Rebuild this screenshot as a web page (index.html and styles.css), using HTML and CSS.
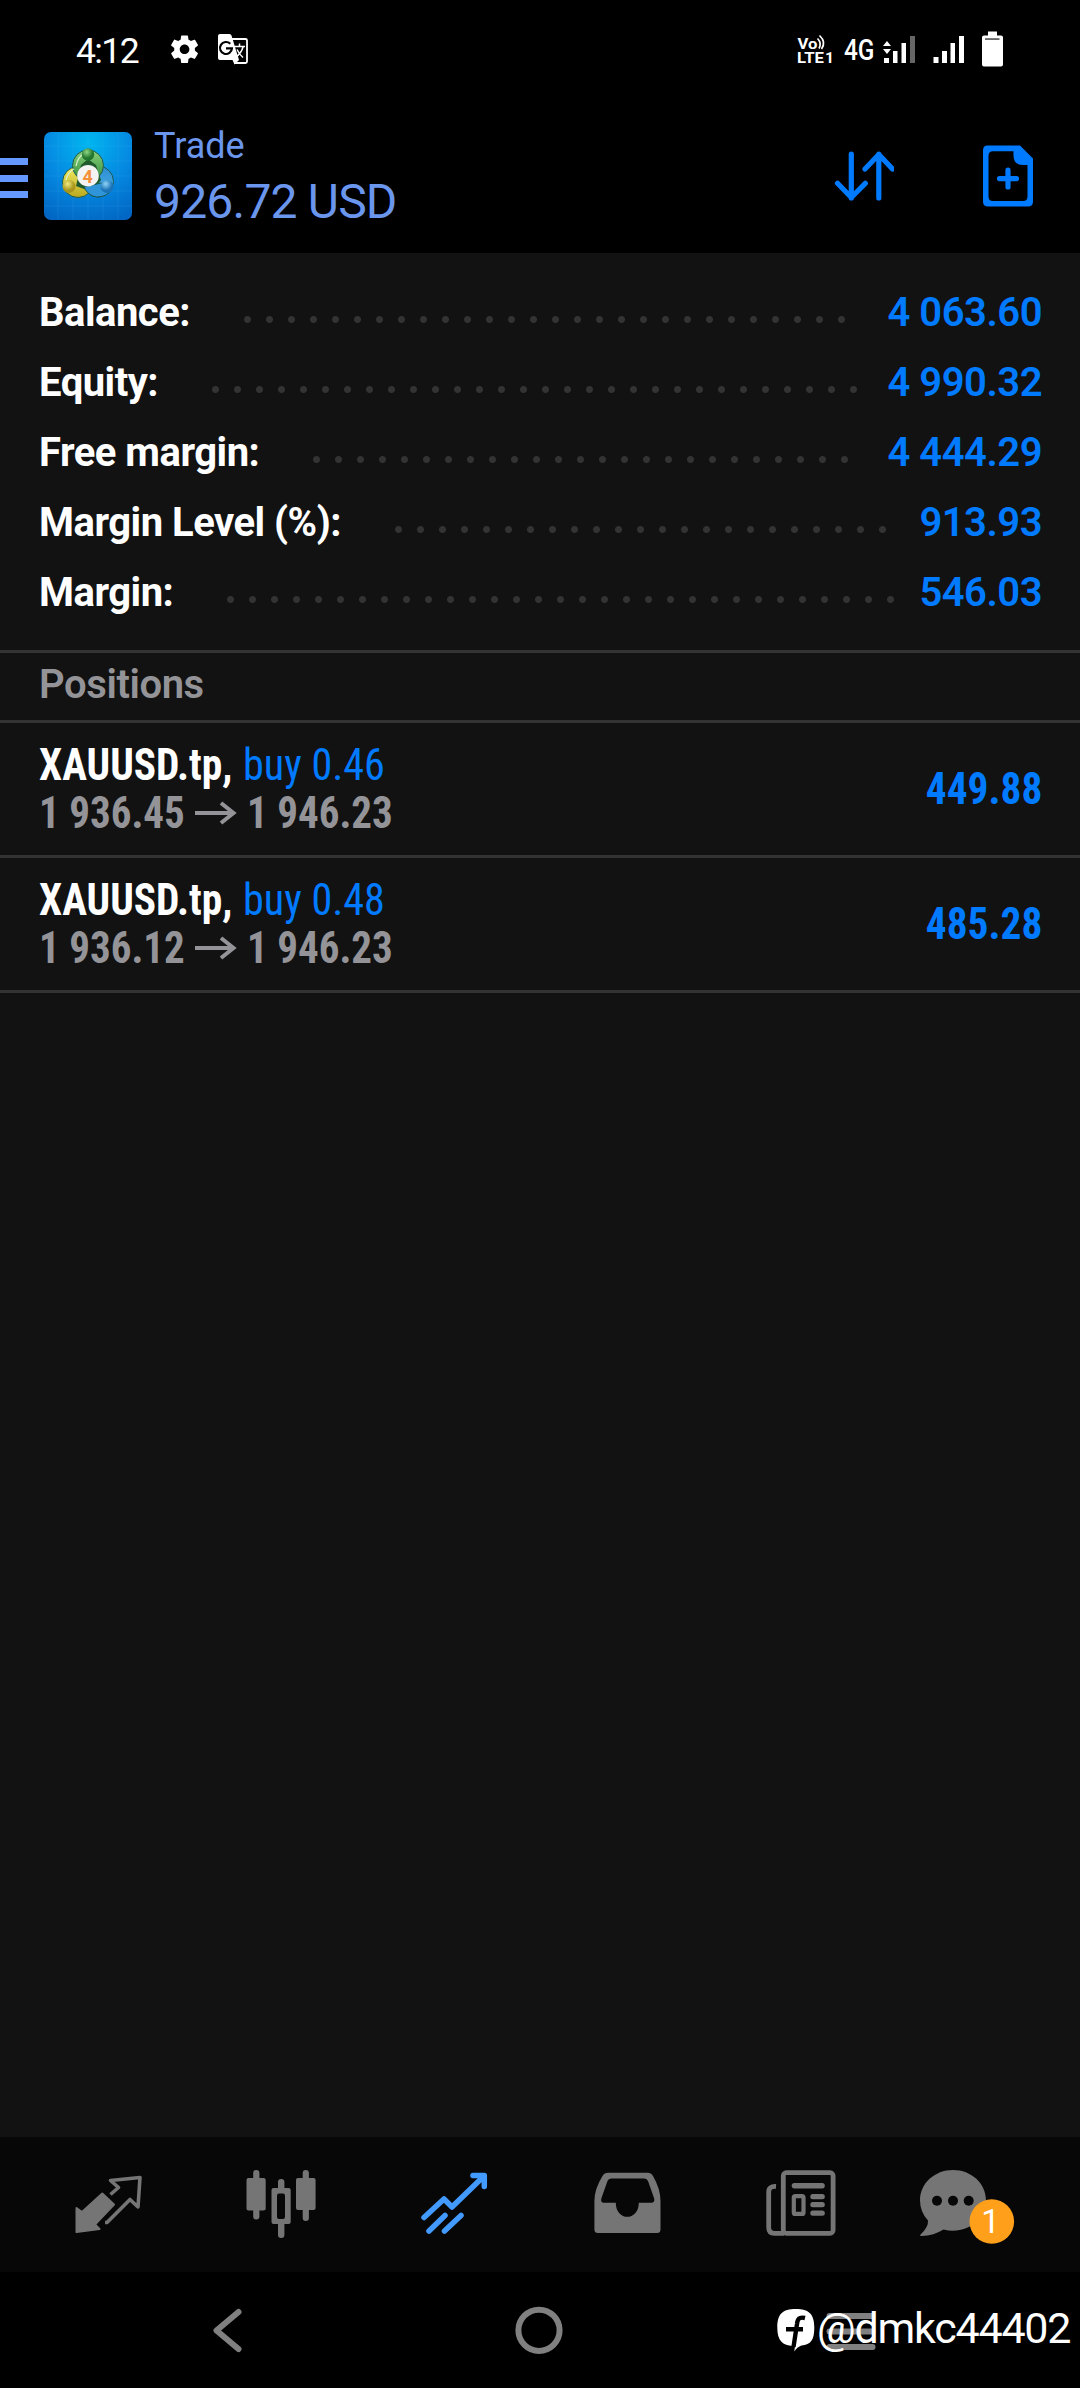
FILE: index.html
```html
<!DOCTYPE html>
<html lang="en">
<head>
<meta charset="utf-8">
<title>Trade</title>
<link rel="stylesheet" href="styles.css">
</head>
<body>
<div class="screen">
  <div class="statusbar">
    <span class="clock">4:12</span>
    <svg class="status-left" width="90" height="40" viewBox="165 30 90 40">
      <path fill="#fff" transform="translate(168 32.7) scale(1.38)" d="M19.43 12.98c.04-.32.07-.64.07-.98s-.03-.66-.07-.98l2.11-1.65c.19-.15.24-.42.12-.64l-2-3.46c-.12-.22-.39-.3-.61-.22l-2.49 1c-.52-.4-1.08-.73-1.69-.98l-.38-2.65C14.46 2.18 14.25 2 14 2h-4c-.25 0-.46.18-.49.42l-.38 2.65c-.61.25-1.17.59-1.69.98l-2.49-1c-.23-.09-.49 0-.61.22l-2 3.46c-.13.22-.07.49.12.64l2.11 1.65c-.04.32-.07.65-.07.98s.03.66.07.98l-2.11 1.65c-.19.15-.24.42-.12.64l2 3.46c.12.22.39.3.61.22l2.49-1c.52.4 1.08.73 1.69.98l.38 2.65c.03.24.24.42.49.42h4c.25 0 .46-.18.49-.42l.38-2.65c.61-.25 1.17-.59 1.69-.98l2.49 1c.23.09.49 0 .61-.22l2-3.46c.12-.22.07-.49-.12-.64l-2.11-1.65zM12 15.5c-1.93 0-3.5-1.57-3.5-3.5s1.57-3.5 3.500-3.500 3.500 1.570 3.500 3.500-1.570 3.500-3.500 3.500z"/>
      <path fill="none" stroke="#fff" stroke-width="1.8" d="M230 39H245.5Q247 39 247 40.5V61.500Q247 63 245.500 63H234"/>
      <path fill="#fff" d="M220 34H229.500Q231 34 231.500 35.500L239 60L234.500 64.500L232.500 60H220Q218 60 218 58V36Q218 34 220 34Z"/>
      <path fill="none" stroke="#000" stroke-width="2.2" d="M230.300 43.800A6 6 0 1 0 232 48.300H226"/>
      <path fill="none" stroke="#fff" stroke-width="1.500" d="M233 46.500H245M239.500 43.500V46.500M243 47Q241.500 53 235.500 57.500M237 49.500Q239.500 54.500 243 57.500"/>
    </svg>
    <svg class="status-right" width="215" height="45" viewBox="795 27 215 45" fill="#fff">
      <g class="volte">
        <text x="797.500" y="49" textLength="20" lengthAdjust="spacingAndGlyphs">Vo</text>
        <text x="797" y="63" textLength="27" lengthAdjust="spacingAndGlyphs">LTE</text>
        <text x="825" y="63" textLength="9" lengthAdjust="spacingAndGlyphs">1</text>
      </g>
      <path fill="none" stroke="#fff" stroke-width="1.700" d="M817.500 38.500Q822 43 819 48.500M819.500 35.500Q826.500 42 821.500 49"/>
      <text class="net" x="844" y="60" textLength="30.500" lengthAdjust="spacingAndGlyphs">4G</text>
      <path d="M883 46L887 41L891 46ZM883 49L887 54L891 49ZM884 58h5v5h-5zM893 51h4.500v12h-4.500zM901.500 43h4.500v20h-4.500z"/>
      <path fill="#666" d="M910 36h5v27h-5z"/>
      <path d="M933.500 57h5v6h-5zM942 51h5v12h-5zM950.500 43h4.500v20h-4.500zM959 36h5v27h-5z"/>
      <path d="M988 31.500h9v4h4q2 0 2 2v27q0 2-2 2h-17q-2 0-2-2v-27q0-2 2-2h4z"/>
      <path fill="#444" d="M985 38.300h14.500v1.500h-14.500z"/>
    </svg>
  </div>

  <header class="header">
    <div class="menu"><i></i><i></i><i></i></div>
    <svg class="logo" width="88" height="88" viewBox="44 132 88 88">
      <defs>
        <radialGradient id="bg" cx=".5" cy=".12" r=".95"><stop offset="0" stop-color="#00b6f0"/><stop offset=".5" stop-color="#058be2"/><stop offset="1" stop-color="#0266c4"/></radialGradient>
        <linearGradient id="gr" x1="0" y1="0" x2="0" y2="1"><stop offset="0" stop-color="#8bd07c"/><stop offset="1" stop-color="#2f8d38"/></linearGradient>
        <linearGradient id="ye" x1="0" y1="0" x2="0" y2="1"><stop offset="0" stop-color="#f0ea62"/><stop offset="1" stop-color="#b9a91f"/></linearGradient>
        <linearGradient id="bl" x1="0" y1="0" x2="0" y2="1"><stop offset="0" stop-color="#2d8ccf"/><stop offset="1" stop-color="#4ab4ee"/></linearGradient>
        <radialGradient id="gh" cx=".4" cy=".3"><stop offset="0" stop-color="#8fd886"/><stop offset="1" stop-color="#21752c"/></radialGradient>
        <radialGradient id="yh" cx=".4" cy=".3"><stop offset="0" stop-color="#f2ea80"/><stop offset="1" stop-color="#a8961c"/></radialGradient>
        <radialGradient id="bh" cx=".4" cy=".3"><stop offset="0" stop-color="#8fd4f7"/><stop offset="1" stop-color="#1b73b8"/></radialGradient>
      </defs>
      <rect x="44" y="132" width="88" height="88" rx="7" fill="url(#bg)"/>
      <path stroke="#5cc8ff" stroke-opacity=".16" stroke-width=".8" d="M58 132V220M73 132V220M88 132V220M103 132V220M118 132V220M44 146H132M44 161H132M44 176H132M44 191H132M44 206H132"/>
      <g stroke="#1c5a50" stroke-width="1">
        <circle cx="98" cy="181.500" r="15.500" fill="url(#bl)"/>
        <circle cx="78" cy="182" r="15.500" fill="url(#ye)"/>
        <circle cx="88" cy="165.500" r="15.500" fill="url(#gr)"/>
        <path fill="#1f5b2c" stroke="none" d="M81 165L88 159L96 165L101 180L92 192L76 186Z"/>
        <path fill="#2f94d8" d="M84 187Q88 196 97 197Q108 197 112 188L101 183Z"/>
      </g>
      <path fill="none" stroke="#d8f2d0" stroke-width="1.300" d="M76 166Q78 156 84 154M66 180Q68 172 74 169"/>
      <circle cx="88" cy="154.500" r="6.200" fill="url(#gh)"/>
      <circle cx="69" cy="186.500" r="6.500" fill="url(#yh)"/>
      <circle cx="107" cy="186.500" r="6.500" fill="url(#bh)"/>
      <circle cx="88" cy="175.700" r="10.800" fill="#f3f3f3"/>
      <text class="logo-num" x="82.500" y="182.500">4</text>
    </svg>
    <div class="title"><span class="title-top">Trade</span><span class="title-sum">926.72 USD</span></div>
    <svg class="sort" width="60" height="54" viewBox="834 150 60 54">
      <path d="M851.300 154V198M837.500 183.300L851.300 197.500L865.300 183.300M878.800 198V154M865 169L878.800 154.500L892.500 169"/>
    </svg>
    <svg class="new-order" width="52" height="62" viewBox="982 145 52 62">
      <path fill="#007aff" fill-rule="evenodd" d="M987.500 145.500H1020L1033 158.500V201.500Q1033 206.500 1028 206.500H988Q983 206.500 983 201.500V150.500Q983 145.500 987.500 145.500ZM993 151.200Q988.500 151.200 988.500 155.700V196.500Q988.500 201 993 201H1023Q1027.500 201 1027.500 196.500V165H1023Q1013.500 165 1013.500 155.500V151.200Z"/>
      <path d="M999.500 178.600H1016.500M1008 170.200V187"/>
    </svg>
  </header>

  <main class="content">
    <section class="summary">
      <div class="row"><span>Balance:</span><div class="leader"><i></i></div><b>4 063.60</b></div>
      <div class="row"><span>Equity:</span><div class="leader"><i></i></div><b>4 990.32</b></div>
      <div class="row"><span>Free margin:</span><div class="leader"><i></i></div><b>4 444.29</b></div>
      <div class="row"><span>Margin Level (%):</span><div class="leader"><i></i></div><b>913.93</b></div>
      <div class="row"><span>Margin:</span><div class="leader"><i></i></div><b>546.03</b></div>
    </section>
    <h2 class="section-title">Positions</h2>
    <section class="position">
      <div class="info">
        <div class="line"><span class="symbol">XAUUSD.tp,</span><span class="side">buy 0.46</span></div>
        <div class="line prices"><span class="open">1 936.45</span><svg width="42" height="24" viewBox="0 0 42 24"><path d="M0 12H39M26 2L38.500 12L26 22"/></svg><span>1 946.23</span></div>
      </div>
      <span class="profit">449.88</span>
    </section>
    <section class="position">
      <div class="info">
        <div class="line"><span class="symbol">XAUUSD.tp,</span><span class="side">buy 0.48</span></div>
        <div class="line prices"><span class="open">1 936.12</span><svg width="42" height="24" viewBox="0 0 42 24"><path d="M0 12H39M26 2L38.500 12L26 22"/></svg><span>1 946.23</span></div>
      </div>
      <span class="profit">485.28</span>
    </section>
  </main>

  <nav class="tabs">
    <svg viewBox="22 2137 173 135">
      <path fill="#757575" stroke="#757575" stroke-width="2" stroke-linejoin="round" d="M76.500 2208L82 2212L102.300 2193.500L114 2204.500L95 2224.500L99.500 2229L76.500 2232Z"/>
      <path class="line-icon" stroke-width="3.600" d="M110.500 2194.500L118.500 2187.500L110.500 2180.500L140 2177.500L138 2207L130 2199.500L107 2222.500H105"/>
    </svg>
    <svg viewBox="195 2137 173 135" fill="#757575">
      <rect x="253.200" y="2170" width="6.200" height="49.500" rx="3"/><rect x="246.500" y="2178" width="19.200" height="32.500" rx="2"/>
      <rect x="278" y="2179" width="6.400" height="59" rx="3"/><rect x="271.500" y="2188" width="19.200" height="36" rx="2"/><rect x="277" y="2193.500" width="8" height="25.500" rx="2" fill="#070707"/>
      <rect x="302.700" y="2170" width="6.200" height="51" rx="3"/><rect x="296" y="2178" width="19.600" height="32" rx="2"/>
    </svg>
    <svg viewBox="368 2137 173 135">
      <path fill="none" stroke="#429aff" stroke-width="5.500" stroke-linecap="round" stroke-linejoin="round" d="M424 2217.500L444 2199L452 2207L484 2176M473 2175.500H484.300V2186.500M429 2231L445 2215.500M444.500 2231L461 2215.500"/>
    </svg>
    <svg viewBox="541 2137 173 135">
      <path fill="#757575" fill-rule="evenodd" d="M608 2172.700H647.500Q651 2172.700 653 2176Q660.500 2189 660.500 2201V2229.500Q660.500 2233 657 2233H598Q594.400 2233 594.400 2229.500V2201Q594.400 2189 602.500 2176Q604.500 2172.700 608 2172.700ZM611 2178.500Q608.500 2178.500 607.500 2181L601.500 2198Q600 2202.700 604 2202.700H615.800C615.800 2221.500 638.800 2221.500 638.800 2202.700H651Q655.500 2202.700 654 2198L648 2181Q647 2178.500 644.500 2178.500Z"/>
    </svg>
    <svg viewBox="714 2137 173 135">
      <rect class="line-icon" stroke-width="4.800" x="783.300" y="2172.700" width="49.800" height="60.600" rx="3"/>
      <path class="line-icon" stroke-width="4.800" d="M776 2186.500Q768.700 2186 768.700 2192V2227.500Q768.700 2233.300 774.500 2233.300H784"/>
      <g fill="#757575"><rect x="791.700" y="2183" width="33.100" height="5.400" rx="2.600"/><rect x="810.300" y="2194" width="14.500" height="5.200" rx="2.500"/><rect x="810.300" y="2202" width="14.500" height="5.300" rx="2.500"/><rect x="810.300" y="2210.400" width="14.500" height="5.300" rx="2.500"/></g>
      <rect class="line-icon" stroke-width="4.200" x="793.800" y="2196.100" width="9.700" height="17.800" rx="1.500"/>
    </svg>
    <svg viewBox="887 2137 173 135">
      <path fill="#757575" d="M953 2170C971.500 2170 986 2183.500 986 2200.300S971.500 2230.700 953 2230.700Q948.500 2230.700 943.500 2229.500Q934 2235.500 921.500 2236Q919 2236 921 2234Q928.500 2227 928 2220.500Q920 2212 920 2200.300C920 2183.500 934.500 2170 953 2170Z"/>
      <circle cx="937" cy="2200.700" r="5" fill="#070707"/><circle cx="953" cy="2200.700" r="5" fill="#070707"/><circle cx="968.700" cy="2200.700" r="5" fill="#070707"/>
      <circle cx="991.800" cy="2221.500" r="22.300" fill="#ff9f1a"/>
      <text class="badge" x="990.500" y="2233" text-anchor="middle">1</text>
    </svg>
  </nav>

  <div class="sysnav">
    <svg width="60" height="60" viewBox="197 2300 60 60"><path d="M238.500 2312L216.500 2330.500L238.500 2349"/></svg>
    <svg width="60" height="60" viewBox="510.500 2300 60 60"><circle cx="540.500" cy="2330.300" r="20.600"/></svg>
    <svg width="60" height="60" viewBox="820.500 2300 60 60"><path d="M829 2316H872M829 2331.500H872M829 2347H872"/></svg>
    <div class="watermark">
      <svg width="38" height="44" viewBox="777 2308 38 44">
        <path fill="#fff" d="M795.700 2309C809 2309 814.300 2314 814.300 2327.500C814.300 2340 811 2344.500 801.500 2345.500Q797 2347 794.300 2351.500L795 2346C782.500 2346 777.300 2341 777.300 2327.500C777.300 2314 782.500 2309 795.700 2309Z"/>
        <path fill="none" stroke="#000" stroke-width="4.400" d="M805 2318C799 2316.500 797.500 2319 797 2324L793.500 2347M786 2329.300H803"/>
      </svg>
      <span>@dmkc44402</span>
    </div>
  </div>
</div>
</body>
</html>
```
FILE: styles.css
```css
* { box-sizing: border-box; }
body { margin: 0; background: #000; font-family: Roboto, "Liberation Sans", sans-serif; }
svg { display: block; flex: none; }
.screen { width: 1080px; height: 2388px; display: flex; flex-direction: column; background: #000; overflow: hidden; }

.statusbar { height: 99px; padding: 0 70px 0 76px; display: flex; align-items: flex-start; color: #fff; }
.clock { width: 89px; font-size: 35.5px; line-height: 42px; letter-spacing: -1.6px; padding-top: 30px; }
.status-left { margin-top: 30px; }
.status-right { margin: 27px 0 0 auto; }
.volte { font: 700 15.5px Roboto, sans-serif; }
.net { font: 500 29px Roboto, sans-serif; }

.header { height: 154px; display: flex; align-items: flex-start; color: #6a96ee; }
.menu { width: 28px; margin: 59px 16px 0 0; display: flex; flex-direction: column; gap: 9.5px; }
.menu i { height: 7px; background: #6699ff; }
.logo { margin-top: 33px; }
.logo-num { font: 700 18px Roboto, sans-serif; fill: #f4903a; }
.title { flex: 1; padding: 26px 0 0 22px; display: flex; flex-direction: column; }
.title-top { font-size: 36px; line-height: 43px; }
.title-sum { font-size: 48px; line-height: 56px; margin-top: 6px; letter-spacing: -.8px; }
.sort { margin: 51px 88px 0 0; }
.new-order { margin: 46px 46px 0 0; }
.sort path, .new-order path + path { fill: none; stroke: #007aff; stroke-width: 5.2; stroke-linecap: round; stroke-linejoin: round; }

.content { flex: 1; background: #121212; color: #fff; }
.summary { padding: 25px 38px 22px 39px; font-size: 40px; line-height: 70px; font-weight: 700; letter-spacing: -.5px; }
.row { display: flex; height: 70px; }
.leader { flex: 1; margin: 0 7px 0 54px; }
/* the dotted leader holds only whole dots */
.leader i { display: block; width: round(down, 100%, 22px); height: 70px; background: radial-gradient(circle at 3.5px 41.5px, #333 3px, transparent 3.9px) 0 0 / 22px 70px repeat-x; }
.row b { font-weight: 600; color: #007aff; }
.section-title { margin: 0; height: 73px; padding: 0 39px; border: solid #333; border-width: 3px 0; font-size: 40px; line-height: 64px; font-weight: 600; color: #949498; letter-spacing: -.4px; }

.position { height: 135px; padding: 0 38px 0 39px; border-bottom: 3px solid #333; display: flex; justify-content: space-between; font-size: 44.5px; font-stretch: 75%; font-weight: 700; }
.info { padding-top: 18px; }
.line { display: flex; line-height: 48px; height: 48px; white-space: nowrap; }
.line span { transform: scaleX(.93); transform-origin: left; }
.symbol { width: 203.5px; }
.line .side { font-weight: 400; color: #007aff; transform: scaleX(.947); }
.prices { color: #949498; font-weight: 700; }
.line.prices span { transform: scaleX(.922); }
.open { width: 156px; }
.prices svg { margin: 12px 10px 0 0; }
.prices path { fill: none; stroke: #949498; stroke-width: 4; }
.profit { color: #007aff; line-height: 133px; transform: scaleX(.93); transform-origin: right; }

.tabs { height: 135px; padding-left: 22px; background: #070707; display: flex; }
.tabs svg { width: 173px; height: 135px; }
.line-icon { fill: none; stroke: #757575; stroke-linejoin: round; }
.badge { font: 400 33px Roboto, sans-serif; fill: #fff; }

.sysnav { position: relative; height: 116px; padding: 28px 199.5px 0 197px; display: flex; justify-content: space-between; align-items: flex-start; }
.sysnav > svg { fill: none; stroke: #808080; stroke-width: 6; stroke-linecap: round; stroke-linejoin: round; }
.watermark { position: absolute; left: 777px; top: 36px; display: flex; gap: 2px; color: #fff; }
.watermark span { font-size: 43px; line-height: 50px; margin-top: -5px; letter-spacing: -1.2px; font-weight: 400; }
```
